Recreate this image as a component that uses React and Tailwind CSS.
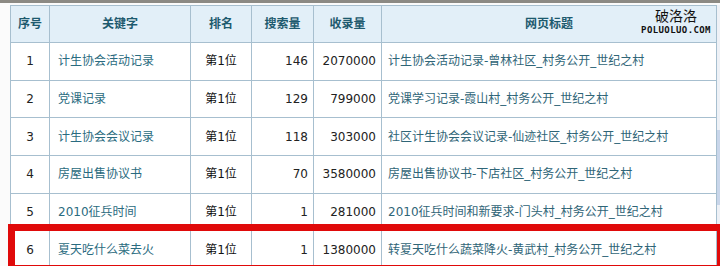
const rows = [
  { no: 1, kw: "计生协会活动记录", rank: "第1位", search: 146, indexed: 2070000, title: "计生协会活动记录-曾林社区_村务公开_世纪之村" },
  { no: 2, kw: "党课记录", rank: "第1位", search: 129, indexed: 799000, title: "党课学习记录-霞山村_村务公开_世纪之村" },
  { no: 3, kw: "计生协会会议记录", rank: "第1位", search: 118, indexed: 303000, title: "社区计生协会会议记录-仙迹社区_村务公开_世纪之村" },
  { no: 4, kw: "房屋出售协议书", rank: "第1位", search: 70, indexed: 3580000, title: "房屋出售协议书-下店社区_村务公开_世纪之村" },
  { no: 5, kw: "2010征兵时间", rank: "第1位", search: 1, indexed: 281000, title: "2010征兵时间和新要求-门头村_村务公开_世纪之村" },
  { no: 6, kw: "夏天吃什么菜去火", rank: "第1位", search: 1, indexed: 1380000, title: "转夏天吃什么蔬菜降火-黄武村_村务公开_世纪之村" },
];

const font = { fontFamily: '"DejaVu Sans", "Noto Sans CJK SC", sans-serif' };

export default function App() {
  return (
    <div className="relative w-[720px] h-[266px] overflow-hidden bg-[#fbfbfb]" style={font}>
      {/* top window edge */}
      <div className="h-[3px] bg-[#8c8a84]" />
      <div className="flex pt-[2px] pl-[10px]">
        <table className="border-collapse table-fixed w-[706px] text-[12px]">
          <colgroup>
            <col className="w-[39px]" />
            <col className="w-[141px]" />
            <col className="w-[61px]" />
            <col className="w-[62px]" />
            <col className="w-[68px]" />
            <col className="w-[335px]" />
          </colgroup>
          <thead>
            <tr className="h-[37px] bg-[#e2eff8] text-[#1d5a6e] font-bold">
              <th className="border border-[#a7bfcf] text-center">序号</th>
              <th className="border border-[#a7bfcf] text-center">关键字</th>
              <th className="border border-[#a7bfcf] text-center">排名</th>
              <th className="border border-[#a7bfcf] text-center">搜索量</th>
              <th className="border border-[#a7bfcf] text-center">收录量</th>
              <th className="border border-[#a7bfcf] text-center">网页标题</th>
            </tr>
          </thead>
          <tbody>
            {rows.map((r) => (
              <tr key={r.no} className="h-[37px] bg-white">
                <td className="border border-[#a7bfcf] text-center text-[#222]">{r.no}</td>
                <td className="border border-[#a7bfcf] pl-[8px] text-[#2a6b80] whitespace-nowrap">{r.kw}</td>
                <td className="border border-[#a7bfcf] text-center text-[#111]">{r.rank}</td>
                <td className="border border-[#a7bfcf] text-right pr-[5px] text-[#222]">{r.search}</td>
                <td className="border border-[#a7bfcf] text-right pr-[5px] text-[#222]">{r.indexed}</td>
                <td className="border border-[#a7bfcf] pl-[6px] text-[#2f6577] whitespace-nowrap">{r.title}</td>
              </tr>
            ))}
          </tbody>
        </table>
        {/* scrollbar */}
        <div className="flex flex-col w-[4px] h-[264px] bg-[#eef1f6]">
          <div className="h-[125px]" />
          <div className="h-[75px] bg-[#c9d6ea]" />
        </div>
      </div>

      {/* watermark */}
      <div className="absolute left-[640px] top-[7px] w-[72px] flex flex-col items-center">
        <span className="h-[16px] text-[14px] leading-[16px] text-[#111]" style={{ fontFamily: '"Noto Sans CJK SC", sans-serif' }}>破洛洛</span>
        <span className="mt-[3px] h-[9px] text-[9px] leading-[9px] font-bold tracking-[0.4px] text-[#111]" style={{ fontFamily: '"DejaVu Sans Mono", monospace' }}>POLUOLUO.COM</span>
      </div>

      {/* red highlight box */}
      <div className="absolute left-[8px] top-[224px] w-[716px] h-[48px] border-[7px] border-[#e00a0a]" />
    </div>
  );
}
